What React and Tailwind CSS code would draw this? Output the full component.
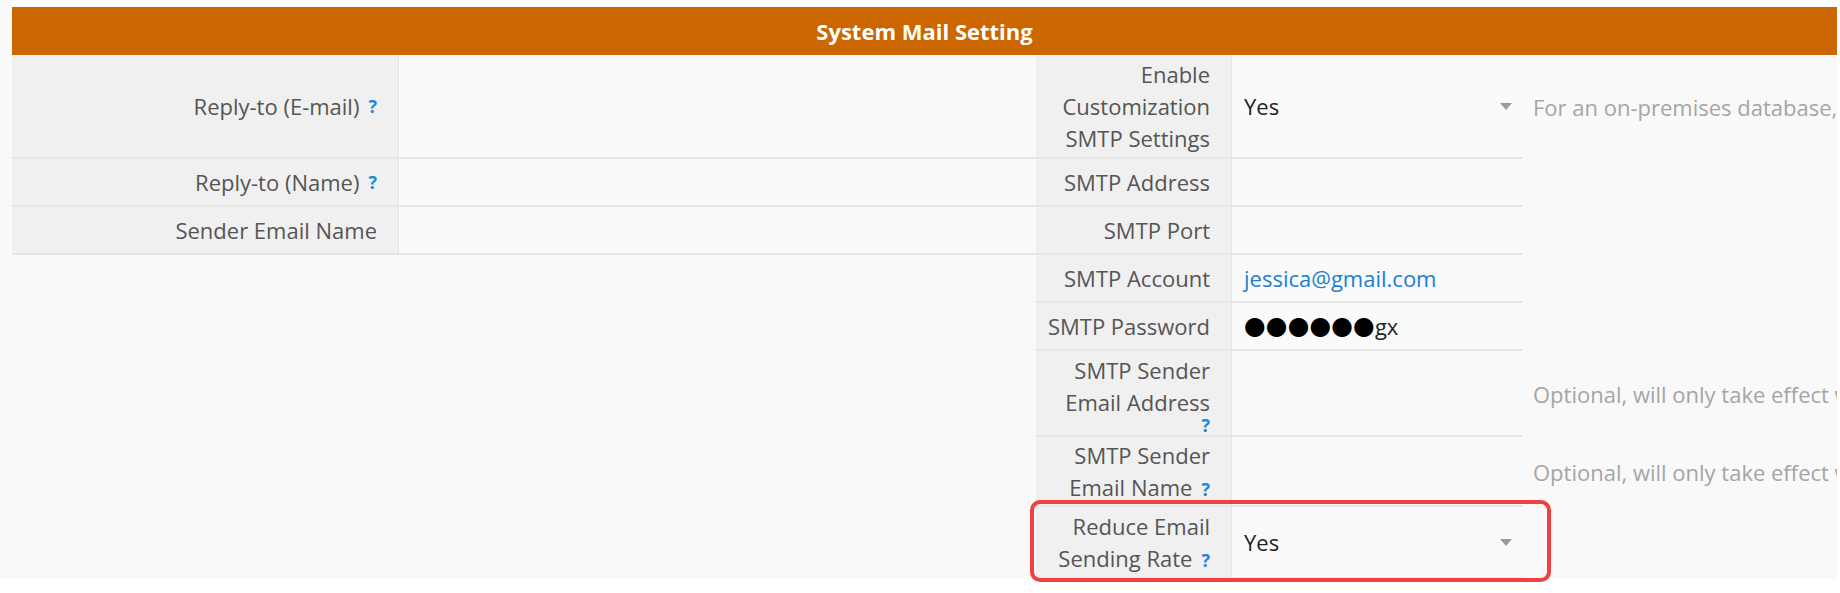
import React from "react";

const Q = () => (
  <span className="ml-[9px] font-bold text-[18px] leading-[1] text-[#1f88d6]">?</span>
);

const Caret = () => (
  <svg width="12" height="7" viewBox="0 0 12 7" className="shrink-0">
    <path d="M0 0 L12 0 L6 7 Z" fill="#9a9a9a" />
  </svg>
);

const lblBase =
  "flex items-center justify-end text-right bg-[#f0f0f0] border-b-2 border-r border-[#e6e6e6] pr-[21px] pl-[12px] text-[#555555] leading-[32px] whitespace-nowrap";
const lbl = lblBase + " py-[3px]";
const lbl7 = lblBase + " py-[2px]";
const lbl8 = lblBase + " py-[3px]";
const valBase =
  "flex items-center bg-[#fafafa] border-b-2 border-[#e6e6e6] min-h-[48px] pl-[12px] pr-[10px] leading-[32px]";
const val = valBase + " text-[#222222]";
const valLink = valBase + " text-[#1b7fd3]";
const desc = "flex items-center pl-[11px] text-[#a5a5a5] whitespace-nowrap";

export default function App() {
  return (
    <div className="relative w-[1840px] h-[593px] bg-white font-['Open_Sans',sans-serif] text-[22px]">
      <div className="flex w-[1837px] h-[579px] bg-[#f9f9f9]">
        <div className="w-[12px] shrink-0" />
        <div className="flex-1 min-w-0 flex flex-col overflow-hidden">
          <div className="h-[7px] bg-white shrink-0" />
          <div className="h-[48px] shrink-0 bg-[#cc6600] flex items-center justify-center text-white font-bold">
            System Mail Setting
          </div>
          <div className="grid grid-cols-[387px_637px_196px_290px_1fr]">
            {/* Row 1 */}
            <div className={lbl}>
              Reply-to (E-mail)
              <Q />
            </div>
            <div className={val}></div>
            <div className={lbl}>
              <div>
                Enable
                <br />
                Customization
                <br />
                SMTP Settings
              </div>
            </div>
            <div className={val + " justify-between"}>
              <span>Yes</span>
              <Caret />
            </div>
            <div className={desc}>For an on-premises database, please set the SMTP server</div>

            {/* Row 2 */}
            <div className={lbl}>
              Reply-to (Name)
              <Q />
            </div>
            <div className={val}></div>
            <div className={lbl}>SMTP Address</div>
            <div className={val}></div>
            <div className={desc}></div>

            {/* Row 3 */}
            <div className={lbl}>Sender Email Name</div>
            <div className={val}></div>
            <div className={lbl}>SMTP Port</div>
            <div className={val}></div>
            <div className={desc}></div>

            {/* Row 4 */}
            <div className="col-span-2" />
            <div className={lbl}>SMTP Account</div>
            <div className={valLink}>jessica@gmail.com</div>
            <div className={desc}></div>

            {/* Row 5 */}
            <div className="col-span-2" />
            <div className={lbl}>SMTP Password</div>
            <div className={val}>
              <span className="font-['DejaVu_Sans',sans-serif] text-[25px] text-black">●●●●●●</span>
              <span>gx</span>
            </div>
            <div className={desc}></div>

            {/* Row 6 */}
            <div className="col-span-2" />
            <div className={lbl}>
              <div className="flex flex-col items-end">
                <span>SMTP Sender</span>
                <span>Email Address</span>
                <span className="font-bold text-[18px] leading-[14px] text-[#1f88d6]">?</span>
              </div>
            </div>
            <div className={val}></div>
            <div className={desc}>Optional, will only take effect when customization is enabled</div>

            {/* Row 7 */}
            <div className="col-span-2" />
            <div className={lbl7}>
              <div>
                SMTP Sender
                <br />
                Email Name
                <Q />
              </div>
            </div>
            <div className={val}></div>
            <div className={desc}>Optional, will only take effect when customization is enabled</div>

            {/* Row 8 */}
            <div className="col-span-2" />
            <div className={lbl8}>
              <div>
                Reduce Email
                <br />
                Sending Rate
                <Q />
              </div>
            </div>
            <div className={val + " justify-between"}>
              <span>Yes</span>
              <Caret />
            </div>
            <div className={desc}></div>
          </div>
        </div>
      </div>
      <div className="absolute left-[1030px] top-[500px] w-[521px] h-[82px] border-[4px] border-[#ef4141] rounded-[10px]" />
    </div>
  );
}
